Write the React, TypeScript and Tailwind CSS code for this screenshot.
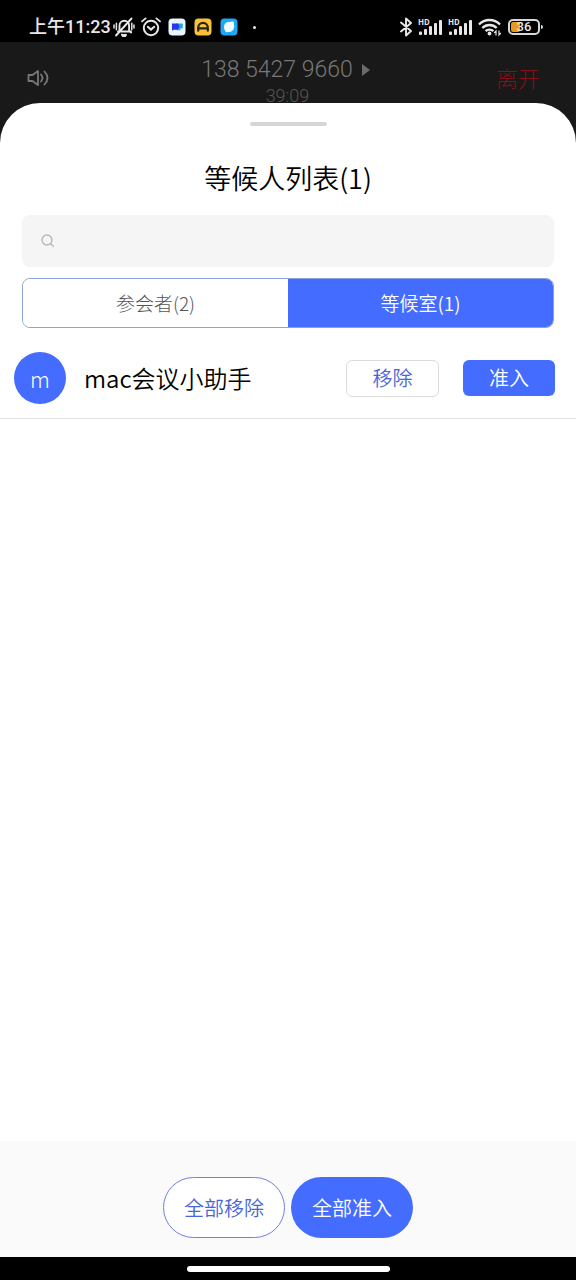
import type { ReactNode } from "react";

const SANS = "font-['Noto_Sans_CJK_SC','Noto_Sans',sans-serif]";

function Signal() {
  return (
    <div className="relative flex h-[18px] w-[26px]">
      <span className="absolute -top-px left-0 text-[8px] leading-[10px] font-bold">HD</span>
      <svg width="26" height="18" viewBox="0 0 26 18" fill="#e8e8e8" aria-hidden="true">
        <rect x="1" y="13.5" width="3" height="3.5" rx="1" />
        <rect x="6" y="11" width="3" height="6" rx="1" />
        <rect x="11" y="8" width="3" height="9" rx="1" />
        <rect x="16" y="5" width="3" height="12" rx="1" />
        <rect x="21" y="2" width="3" height="15" rx="1" />
      </svg>
    </div>
  );
}

function StatusBar() {
  return (
    <div className="flex h-[42px] items-center justify-between bg-black pt-3 pr-9 pl-[29px] text-[#e8e8e8]">
      <div className="flex items-center">
        <span className="w-[80px] font-['Roboto','Noto_Sans_CJK_SC',sans-serif] text-[18px] leading-6 font-medium whitespace-nowrap">
          上午11:23
        </span>
        <div className="flex items-center gap-[6px] pl-1">
          <svg width="22" height="20" viewBox="0 0 22 20" fill="none" stroke="#e8e8e8" strokeWidth="1.6" strokeLinecap="round" aria-hidden="true">
            <path d="M5 14.5h13M6.5 14V8.5a4.8 4.8 0 0 1 9.6 0V14l2 1.5M3 18.5 18.5 1.5" strokeWidth="1.9" />
            <path d="M8.5 17.4h5a2.5 2.5 0 0 1-5 0z" fill="#e8e8e8" strokeWidth="1" />
            <path d="M1 8v3M3.4 6.2v6.5M21 8v3M18.8 6.2v6.5" strokeWidth="1.5" />
          </svg>
          <svg width="20" height="20" viewBox="0 0 20 20" fill="none" stroke="#e8e8e8" strokeWidth="2" strokeLinecap="round" aria-hidden="true">
            <circle cx="10" cy="11" r="7.2" />
            <path d="M6.8 9.8 10 12.6l3.2-2.8" />
            <path d="M1 4.4 4.6 1.4M19 4.4l-3.6-3" strokeWidth="1.8" />
          </svg>
          <svg width="20" height="18" viewBox="0 0 20 18" aria-hidden="true">
            <rect x="1.5" y="0.5" width="17" height="17" rx="4" fill="#e9f5ff" />
            <path d="M9 5.6h6a.8.8 0 0 1 .8.8v4.2l-2.3-.4v2H10z" fill="#24a5ee" />
            <path d="M5 5.6h6l1.5 2.9-1.8 3.3H6.6L5 12.8z" fill="#2737e8" />
          </svg>
          <svg width="20" height="18" viewBox="0 0 20 18" aria-hidden="true">
            <rect x="1.5" y="0.5" width="17" height="17" rx="4" fill="#fac13b" />
            <path d="M5.2 12.7V9.6a4.8 4.8 0 0 1 9.6 0v3.1M6.5 10.4h7" fill="none" stroke="#2a2418" strokeWidth="2.2" strokeLinecap="round" />
          </svg>
          <svg width="20" height="18" viewBox="0 0 20 18" aria-hidden="true">
            <rect x="1.5" y="0.5" width="17" height="17" rx="4" fill="#1da7f5" />
            <path d="M5 9c0-3.2 2.3-5.1 5-5.1 1.6 0 3-.8 4.2-.3 1 .4.7 2 .9 3.5.5 3.8-1.5 7-5.1 7-1.1 0-2 .4-3 0s-.6-1.2-1.2-1.9C5.2 11.4 5 10.3 5 9z" fill="#f2fbff" />
          </svg>
        </div>
        <span className="ml-[14px] size-[3px] rounded-full bg-[#e8e8e8]" />
      </div>
      <div className="flex items-center gap-1">
        <svg width="14" height="20" viewBox="0 0 14 20" fill="none" stroke="#e8e8e8" strokeWidth="1.9" strokeLinejoin="round" strokeLinecap="round" aria-hidden="true">
          <path d="M1 5.5 11 14l-5 4.500v-17L11 6 1 14.5" />
        </svg>
        <Signal />
        <Signal />
        <svg width="26" height="20" viewBox="0 0 26 20" fill="none" stroke="#e8e8e8" strokeWidth="2.4" aria-hidden="true">
          <path d="M1 7.5a14.5 14.5 0 0 1 21 0M4.3 11a10 10 0 0 1 14.4 0M7.6 14.2a5.5 5.5 0 0 1 7.8 0" />
          <circle cx="11.5" cy="16.5" r="1.9" fill="#e8e8e8" stroke="none" />
          <path d="M18 18.5v-4.5l-1.8 2M21 13.5V18l1.8-2" strokeWidth="1.2" />
        </svg>
        <div className="relative flex h-4 w-8 items-center justify-center rounded-[5px] border-2 border-[#d8d8d8]">
          <span className="absolute top-px bottom-px left-px w-[9px] rounded-[2px] bg-[#e99a1c]" />
          <span className="relative font-['Roboto',sans-serif] text-[13px] leading-3 font-medium">36</span>
          <span className="absolute top-1 -right-[5px] h-1 w-[2px] rounded-r bg-[#d8d8d8]" />
        </div>
      </div>
    </div>
  );
}

function MeetingHeader() {
  return (
    <header className="flex h-[61px] items-start justify-between pr-9 pl-[27px]">
      <button type="button" aria-label="扬声器" className="mt-[26px] w-12">
        <svg width="23" height="20" viewBox="0 0 23 20" fill="none" stroke="#777" strokeWidth="1.8" strokeLinejoin="round" aria-hidden="true">
          <path d="M1.5 7h4l5.5-4v14l-5.5-4h-4z" />
          <path d="M14 6.5q3 3.5 0 7M17.5 3.5q6 6.5 0 13" strokeLinecap="round" />
        </svg>
      </button>
      <div className="flex flex-col items-center pt-[14px] font-['Roboto',sans-serif] font-light">
        <button type="button" className="flex items-center gap-[9px] text-[23px] leading-7 whitespace-nowrap text-[#777]">
          138 5427 9660
          <svg width="8" height="12" viewBox="0 0 8 12" fill="#6b6b6b" aria-hidden="true">
            <path d="M0 0 8 6 0 12z" />
          </svg>
        </button>
        <span className="pl-1 text-[18px] leading-6 text-[#555]">39:09</span>
      </div>
      <button type="button" className="mt-[21px] text-[22px] leading-7 font-light text-[#85101a]">
        离开
      </button>
    </header>
  );
}

function SegmentButton({ active, children }: { active?: boolean; children: ReactNode }) {
  return (
    <button
      type="button"
      role="tab"
      aria-selected={!!active}
      className={
        active
          ? "flex-1 bg-[#446cff] text-[19px] font-[350] text-white"
          : "flex-1 bg-white text-[19px] font-light text-[#555]"
      }
    >
      {children}
    </button>
  );
}

function WaitingSheet() {
  return (
    <main className="flex flex-1 flex-col overflow-hidden rounded-t-[40px] bg-white">
      <div className="mx-auto mt-[19px] h-1 w-[77px] rounded-sm bg-[#d6d6d6]" />
      <h1 className="mt-8 text-center text-[27px] leading-10 font-[350] text-black">等候人列表(1)</h1>
      <label className="mx-[22px] mt-[17px] flex h-[52px] items-center rounded-lg bg-[#f5f5f5] pl-[18px]">
        <svg width="16" height="16" viewBox="0 0 16 16" fill="none" stroke="#b8b8b8" strokeWidth="1.4" aria-hidden="true">
          <circle cx="7" cy="7" r="5" />
          <path d="m10.7 10.7 3 3" />
        </svg>
        <input type="search" aria-label="搜索" className="h-full min-w-0 flex-1 bg-transparent px-3 text-[19px] outline-none" />
      </label>
      <div role="tablist" className="mx-[22px] mt-[11px] flex h-[50px] overflow-hidden rounded-lg border border-[#8ba2d8]">
        <SegmentButton>参会者(2)</SegmentButton>
        <SegmentButton active>等候室(1)</SegmentButton>
      </div>
      <ul>
        <li className="flex h-[91px] items-center border-b border-[#e2e2e2] pt-[10px] pr-[21px] pl-[14px]">
          <span className="flex size-[52px] items-center justify-center rounded-full bg-[#446cff] text-[22px] font-light text-white">
            m
          </span>
          <span className="ml-[18px] flex-1 text-[24px] font-[350] text-black">mac会议小助手</span>
          <button type="button" className="h-[37px] w-[93px] rounded-md border border-[#dcdcdc] text-[20px] leading-[34px] font-[350] text-[#4666d8]">
            移除
          </button>
          <button type="button" className="ml-6 h-9 w-[92px] rounded-md bg-[#446cff] text-[20px] leading-[34px] font-[350] text-white">
            准入
          </button>
        </li>
      </ul>
      <footer className="mt-auto flex h-[116px] items-start justify-center gap-[6px] bg-[#fafafa] pt-9">
        <button type="button" className="h-[61px] w-[122px] rounded-full border border-[#6f82d8] bg-white text-[20px] font-[350] text-[#4666d8]">
          全部移除
        </button>
        <button type="button" className="h-[61px] w-[122px] rounded-full bg-[#446cff] text-[20px] font-[350] text-white">
          全部准入
        </button>
      </footer>
    </main>
  );
}

export default function App() {
  return (
    <div lang="zh-CN" className={`flex min-h-screen flex-col bg-[#191919] ${SANS}`}>
      <StatusBar />
      <MeetingHeader />
      <WaitingSheet />
      <div className="flex h-[23px] items-center justify-center bg-black">
        <span className="h-[6px] w-[203px] rounded-full bg-white" />
      </div>
    </div>
  );
}
